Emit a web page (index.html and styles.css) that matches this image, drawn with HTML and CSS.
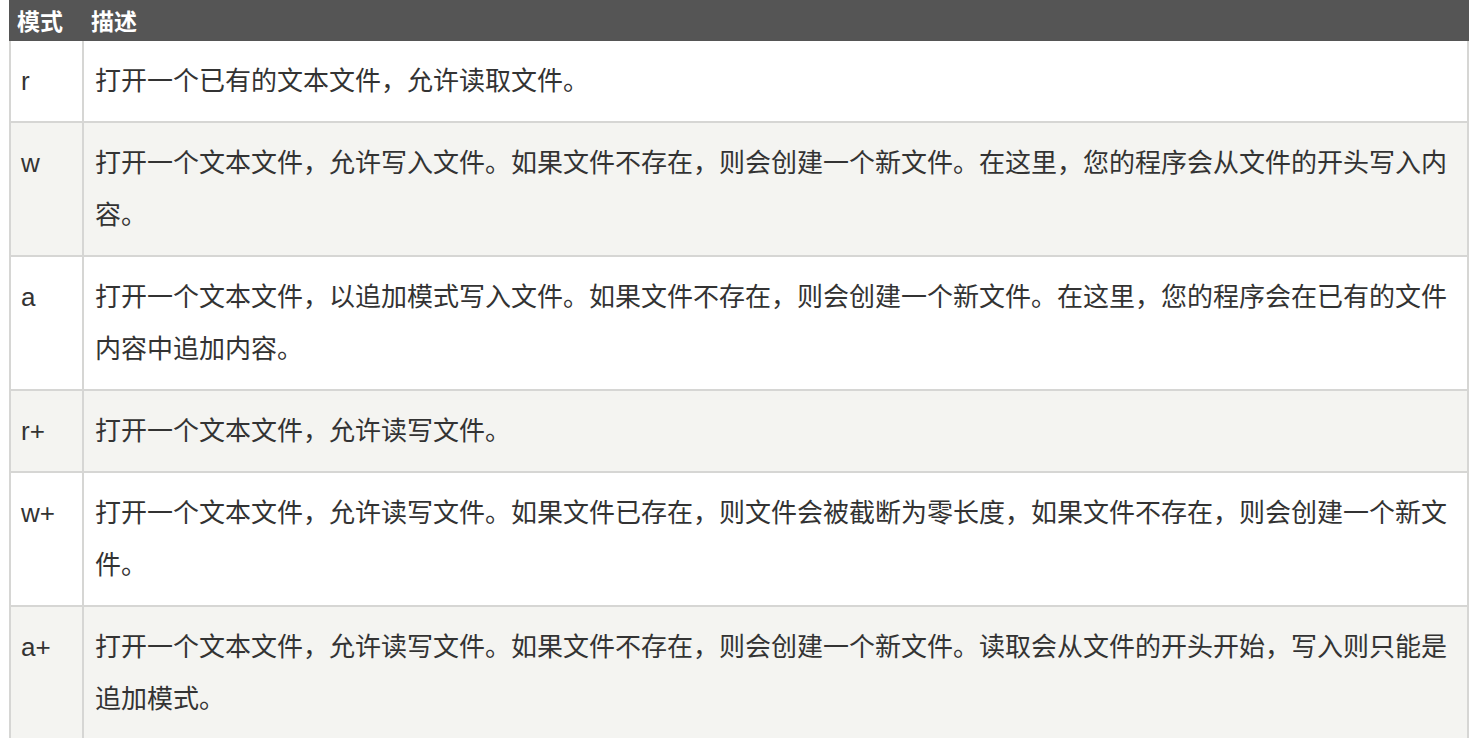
FILE: index.html
```html
<!DOCTYPE html>
<html lang="zh-CN">
<head>
<meta charset="utf-8">
<title>文件模式</title>
<link rel="stylesheet" href="styles.css">
</head>
<body>
<table class="modes">
  <thead>
    <tr><th class="col-mode">模式</th><th class="col-desc">描述</th></tr>
  </thead>
  <tbody>
    <tr><td class="mode">r</td><td class="desc">打开一个已有的文本文件，允许读取文件。</td></tr>
    <tr class="alt"><td class="mode">w</td><td class="desc">打开一个文本文件，允许写入文件。如果文件不存在，则会创建一个新文件。在这里，您的程序会从文件的开头写入内容。</td></tr>
    <tr><td class="mode">a</td><td class="desc">打开一个文本文件，以追加模式写入文件。如果文件不存在，则会创建一个新文件。在这里，您的程序会在已有的文件内容中追加内容。</td></tr>
    <tr class="alt"><td class="mode">r+</td><td class="desc">打开一个文本文件，允许读写文件。</td></tr>
    <tr><td class="mode">w+</td><td class="desc">打开一个文本文件，允许读写文件。如果文件已存在，则文件会被截断为零长度，如果文件不存在，则会创建一个新文件。</td></tr>
    <tr class="alt"><td class="mode">a+</td><td class="desc">打开一个文本文件，允许读写文件。如果文件不存在，则会创建一个新文件。读取会从文件的开头开始，写入则只能是追加模式。</td></tr>
  </tbody>
</table>
</body>
</html>
```

FILE: styles.css
```css
html, body {
  margin: 0;
  padding: 0;
  background: #ffffff;
}

body {
  padding-left: 9px;
  font-family: "Liberation Sans", "Noto Sans CJK SC", sans-serif;
  color: #333333;
}

.modes {
  width: 1460px;
  border-collapse: separate;
  border-spacing: 0;
  table-layout: fixed;
}

.modes th {
  background: #555555;
  color: #ffffff;
  font-weight: bold;
  font-size: 23px;
  line-height: 41px;
  height: 41px;
  padding: 0 7px;
  text-align: left;
  font-family: "Noto Sans CJK SC", sans-serif;
}

.modes th.col-mode {
  width: 75px;
  padding-left: 8px;
  box-sizing: border-box;
}

.modes td {
  font-size: 26px;
  line-height: 52px;
  padding: 14px 11px;
  border-bottom: 2px solid #d6d6d4;
  vertical-align: top;
  text-align: left;
  background: #ffffff;
}

.modes td.desc {
  border-right: 2px solid #d6d6d4;
}

.modes td.mode {
  border-left: 2px solid #d6d6d4;
  border-right: 2px solid #d6d6d4;
  padding-left: 10px;
  padding-right: 4px;
}

.modes tr.alt td {
  background: #f4f4f1;
}
```
